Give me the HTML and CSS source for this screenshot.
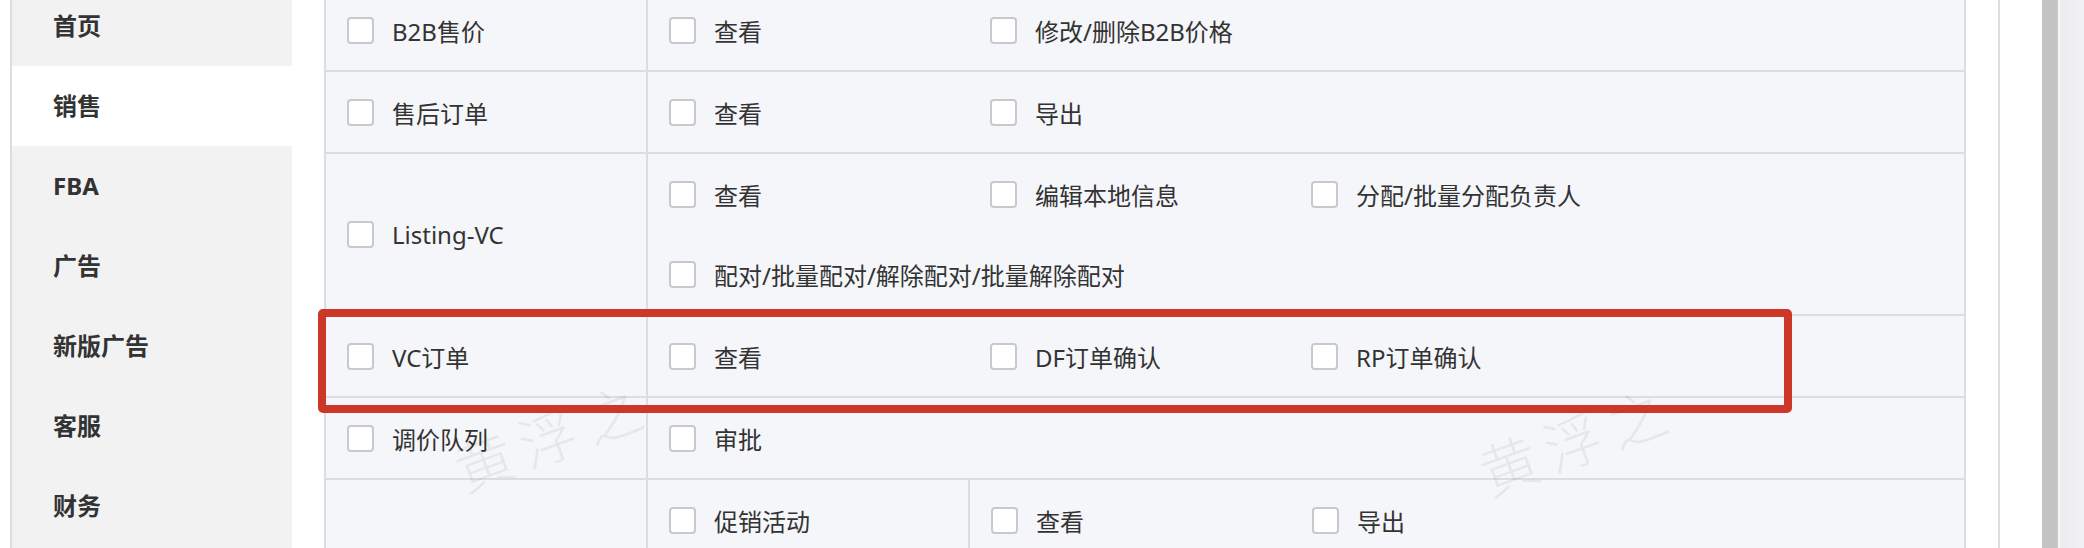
FILE: index.html
```html
<!DOCTYPE html>
<html lang="zh-CN">
<head>
    <meta charset="UTF-8">
    <meta name="viewport" content="width=device-width, initial-scale=1.0">
    <title>角色权限设置</title>
    <link rel="stylesheet" href="styles.css">
</head>
<body>

<div class="frame">
    <!-- 左侧模块菜单 -->
    <ul class="module-nav">
        <li class="nav-item">首页</li>
        <li class="nav-item active">销售</li>
        <li class="nav-item">FBA</li>
        <li class="nav-item">广告</li>
        <li class="nav-item">新版广告</li>
        <li class="nav-item">客服</li>
        <li class="nav-item">财务</li>
    </ul>

    <!-- 权限表 -->
    <div class="perm-table">
        <div class="perm-row">
            <label class="perm-label"><span class="checkbox"></span>B2B售价</label>
            <div class="perm-items">
                <label class="perm-item"><span class="checkbox"></span>查看</label>
                <label class="perm-item"><span class="checkbox"></span>修改/删除B2B价格</label>
            </div>
        </div>

        <div class="perm-row">
            <label class="perm-label"><span class="checkbox"></span>售后订单</label>
            <div class="perm-items">
                <label class="perm-item"><span class="checkbox"></span>查看</label>
                <label class="perm-item"><span class="checkbox"></span>导出</label>
            </div>
        </div>

        <div class="perm-row">
            <label class="perm-label"><span class="checkbox"></span>Listing-VC</label>
            <div class="perm-items">
                <label class="perm-item"><span class="checkbox"></span>查看</label>
                <label class="perm-item"><span class="checkbox"></span>编辑本地信息</label>
                <label class="perm-item"><span class="checkbox"></span>分配/批量分配负责人</label>
                <label class="perm-item"><span class="checkbox"></span>配对/批量配对/解除配对/批量解除配对</label>
            </div>
        </div>

        <div class="perm-row">
            <label class="perm-label"><span class="checkbox"></span>VC订单</label>
            <div class="perm-items">
                <label class="perm-item"><span class="checkbox"></span>查看</label>
                <label class="perm-item"><span class="checkbox"></span>DF订单确认</label>
                <label class="perm-item"><span class="checkbox"></span>RP订单确认</label>
            </div>
        </div>

        <div class="perm-row">
            <label class="perm-label"><span class="checkbox"></span>调价队列</label>
            <div class="perm-items">
                <label class="perm-item"><span class="checkbox"></span>审批</label>
            </div>
        </div>

        <!-- 下一组只露出顶部，文字在可视区外 -->
        <div class="perm-row">
            <label class="perm-label"><span class="checkbox"></span></label>
            <div class="perm-groups">
                <div class="perm-group">
                    <label class="perm-label"><span class="checkbox"></span>促销活动</label>
                    <div class="perm-items">
                        <label class="perm-item"><span class="checkbox"></span>查看</label>
                        <label class="perm-item"><span class="checkbox"></span>导出</label>
                    </div>
                </div>
                <div class="perm-group">
                    <label class="perm-label"><span class="checkbox"></span></label>
                    <div class="perm-items">
                        <label class="perm-item"><span class="checkbox"></span></label>
                    </div>
                </div>
            </div>
        </div>
    </div>
</div>

<div class="scroll-track">
    <div class="scroll-thumb"></div>
</div>

<!-- 水印 -->
<div class="watermark wm-1">黄浮之</div>
<div class="watermark wm-2">黄浮之</div>

<!-- 标注框 -->
<div class="highlight"></div>

</body>
</html>
```

FILE: styles.css
```css
body {
    font-family: 'Noto Sans', 'Noto Sans CJK SC', sans-serif;
    color: #333;
    background-color: #fff;
    margin: 0;
    padding: 0;
    height: 548px;
    overflow: hidden;
    display: flex;
    align-items: flex-start;
    position: relative;
}

.frame {
    display: flex;
    align-items: flex-start;
    margin-left: 10px;
    width: 1986px;
    height: 548px;
    overflow: hidden;
    border-left: 2px solid #dcdde1;
    border-right: 2px solid #dcdde1;
}

.module-nav {
    list-style: none;
    margin: -14px 32px 0 0;
    padding: 0;
    width: 280px;
    height: 562px;
    background-color: #f2f2f2;
}

.nav-item {
    height: 80px;
    line-height: 80px;
    padding-left: 41px;
    font-size: 24px;
    font-weight: bold;
    color: #333;
}

.nav-item.active {
    background-color: #fff;
}

.perm-table {
    margin-top: -10px;
    width: 1638px;
    background-color: #f5f6f9;
    border-left: 2px solid #dcdde1;
    border-right: 2px solid #dcdde1;
}

.perm-row {
    display: flex;
    border-bottom: 2px solid #dcdde1;
}

.perm-label {
    width: 299px;
    min-height: 80px;
    flex-shrink: 0;
    padding-left: 21px;
    display: flex;
    align-items: center;
    border-right: 2px solid #dcdde1;
    font-size: 24px;
}

.perm-items {
    flex: 1;
    display: flex;
    flex-wrap: wrap;
    padding-left: 21px;
}

.perm-item {
    min-width: 321px;
    height: 80px;
    display: flex;
    align-items: center;
    font-size: 24px;
}

.perm-groups {
    flex: 1;
}

.perm-group {
    display: flex;
}

.perm-group + .perm-group {
    border-top: 2px solid #dcdde1;
}

.checkbox {
    width: 27px;
    height: 27px;
    flex-shrink: 0;
    box-sizing: border-box;
    border: 2px solid #c8c9cc;
    border-radius: 4px;
    background-color: #fff;
    margin-right: 18px;
}

.scroll-track {
    width: 84px;
    height: 548px;
    display: flex;
    background: linear-gradient(to right, #fff 42px, #e9e9eb 42px, #f1f1f3);
}

.scroll-thumb {
    margin-left: 42px;
    width: 16px;
    height: 548px;
    background-color: #c4c4c4;
    border-right: 2px solid #f7f7f7;
}

.watermark {
    position: absolute;
    font-family: 'Noto Sans CJK SC', sans-serif;
    font-weight: 300;
    font-size: 58px;
    letter-spacing: 10px;
    color: rgba(0, 0, 0, 0.06);
    transform: rotate(-20deg);
    white-space: nowrap;
}

.wm-1 {
    left: 450px;
    top: 392px;
}

.wm-2 {
    left: 1475px;
    top: 396px;
}

.highlight {
    position: absolute;
    left: 318px;
    top: 309px;
    width: 1474px;
    height: 104px;
    box-sizing: border-box;
    border: 8px solid #cc3727;
    border-radius: 5px;
}
```
